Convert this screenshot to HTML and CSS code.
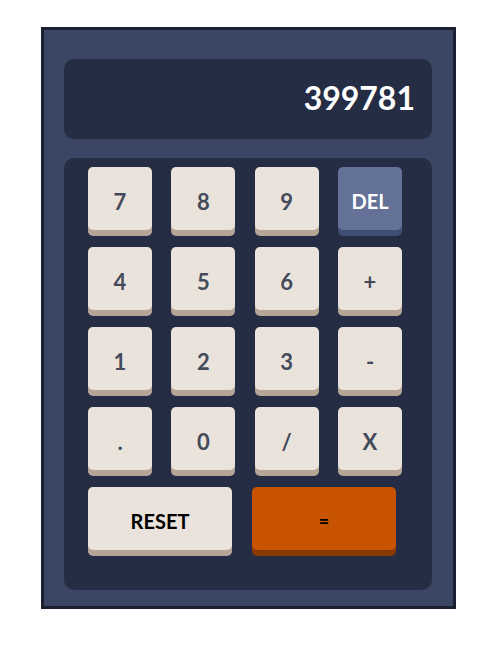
FILE: index.html
```html
<!DOCTYPE html>
<html>
<head>
<meta charset="utf-8">
<link rel="stylesheet" href="styles.css">
</head>
<body>
<div class="calc">
  <div class="screen">399781</div>
  <div class="keypad">
    <div class="grid">
      <button class="key">7</button>
      <button class="key">8</button>
      <button class="key">9</button>
      <button class="key del">DEL</button>
      <button class="key">4</button>
      <button class="key">5</button>
      <button class="key">6</button>
      <button class="key">+</button>
      <button class="key">1</button>
      <button class="key">2</button>
      <button class="key">3</button>
      <button class="key">-</button>
      <button class="key">.</button>
      <button class="key">0</button>
      <button class="key">/</button>
      <button class="key">X</button>
    </div>
    <div class="bottom">
      <button class="key wide reset">RESET</button>
      <button class="key wide equals">=</button>
    </div>
  </div>
</div>
</body>
</html>
```
FILE: styles.css
```css
body {
  margin: 0;
  background: #ffffff;
}
.calc {
  box-sizing: border-box;
  width: 415px;
  height: 582px;
  margin: 27px 0 0 41px;
  border: 3px solid #1b2030;
  background: #3b4664;
  padding: 29px 21px 16px 20px;
  display: flex;
  flex-direction: column;
  gap: 19px;
}
.screen {
  box-sizing: border-box;
  height: 80px;
  border-radius: 10px;
  background: #242d44;
  display: flex;
  align-items: center;
  justify-content: flex-end;
  padding: 0 17px 4px 0;
  font: 700 32px "Lato", sans-serif;
  color: #ffffff;
}
.keypad {
  box-sizing: border-box;
  height: 432px;
  border-radius: 10px;
  background: #242d44;
  padding: 9px 30px 0 24px;
}
.grid {
  display: grid;
  grid-template-columns: repeat(4, 64px);
  grid-auto-rows: 63px;
  column-gap: 19.33px;
  row-gap: 17px;
}
.key {
  border: none;
  margin: 0;
  padding: 0;
  border-radius: 5px;
  background: #eae3dc;
  box-shadow: 0 6px 0 #b4a597;
  color: #434a59;
  font: 700 22px "Lato", sans-serif;
  display: flex;
  align-items: center;
  justify-content: center;
  padding-top: 5px;
}
.key.del {
  background: #647198;
  box-shadow: 0 6px 0 #414e73;
  color: #ffffff;
  font-size: 20px;
}
.bottom {
  display: flex;
  gap: 20px;
  margin-top: 17px;
}
.key.wide {
  width: 144px;
  height: 63px;
}
.key.reset {
  color: #000000;
  font-size: 20px;
}
.key.equals {
  background: #c85402;
  box-shadow: 0 6px 0 #873901;
  color: #000000;
  font-size: 18px;
}
```
